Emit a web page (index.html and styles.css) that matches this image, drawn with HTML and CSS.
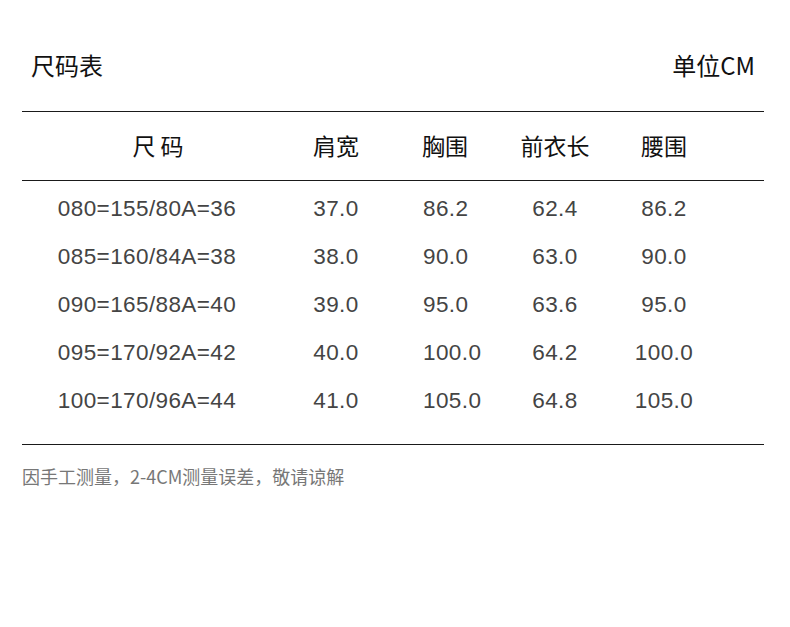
FILE: index.html
```html
<!DOCTYPE html>
<html lang="zh-CN">
<head>
<meta charset="utf-8">
<title>尺码表</title>
<link rel="stylesheet" href="styles.css">
</head>
<body>
<div class="page">
  <div class="title-row">
    <span class="title">尺码表</span>
    <span class="unit">单位CM</span>
  </div>
  <div class="table">
    <div class="row head">
      <div class="c c1 h1">尺 码</div>
      <div class="c c2">肩宽</div>
      <div class="c c3">胸围</div>
      <div class="c c4">前衣长</div>
      <div class="c c5">腰围</div>
    </div>
    <div class="body">
      <div class="row data">
        <div class="c c1">080=155/80A=36</div><div class="c c2">37.0</div><div class="c c3">86.2</div><div class="c c4">62.4</div><div class="c c5">86.2</div>
      </div>
      <div class="row data">
        <div class="c c1">085=160/84A=38</div><div class="c c2">38.0</div><div class="c c3">90.0</div><div class="c c4">63.0</div><div class="c c5">90.0</div>
      </div>
      <div class="row data">
        <div class="c c1">090=165/88A=40</div><div class="c c2">39.0</div><div class="c c3">95.0</div><div class="c c4">63.6</div><div class="c c5">95.0</div>
      </div>
      <div class="row data">
        <div class="c c1">095=170/92A=42</div><div class="c c2">40.0</div><div class="c c3">100.0</div><div class="c c4">64.2</div><div class="c c5">100.0</div>
      </div>
      <div class="row data">
        <div class="c c1">100=170/96A=44</div><div class="c c2">41.0</div><div class="c c3">105.0</div><div class="c c4">64.8</div><div class="c c5">105.0</div>
      </div>
    </div>
  </div>
  <p class="note">因手工测量，2-4CM测量误差，敬请谅解</p>
</div>
</body>
</html>
```

FILE: styles.css
```css
html, body {
  margin: 0;
  padding: 0;
  background: #fff;
}
body {
  font-family: "Noto Sans CJK SC", "Liberation Sans", sans-serif;
  color: #111;
}
.page {
  width: 742px;
  margin-left: 22px;
}
.title-row {
  display: flex;
  justify-content: space-between;
  align-items: center;
  height: 44px;
  margin-top: 43px;
  padding: 0 9px 24px 9px;
  border-bottom: 1px solid #1a1a1a;
  font-size: 24px;
  line-height: 44px;
}
.table {
  border-bottom: 1px solid #1a1a1a;
}
.row {
  display: grid;
  grid-template-columns: 250px 128px 90px 130px 88px 1fr;
  align-items: center;
}
.head {
  height: 66px;
  padding-bottom: 2px;
  border-bottom: 1px solid #1a1a1a;
  font-size: 23px;
  color: #111;
}
.body {
  padding: 4px 0 19px;
}
.data {
  height: 48px;
  font-family: "Liberation Sans", "Noto Sans CJK SC", sans-serif;
  font-size: 22.5px;
  letter-spacing: 0.4px;
  color: #444;
}
.c {
  text-align: center;
  white-space: nowrap;
}
.h1 {
  padding-left: 22px;
}
.c3 {
  text-align: left;
  padding-left: 23px;
}
.head .c3 {
  padding-left: 22px;
}
.note {
  margin: 21px 0 0;
  font-size: 18px;
  line-height: 20px;
  color: #777;
}
```
